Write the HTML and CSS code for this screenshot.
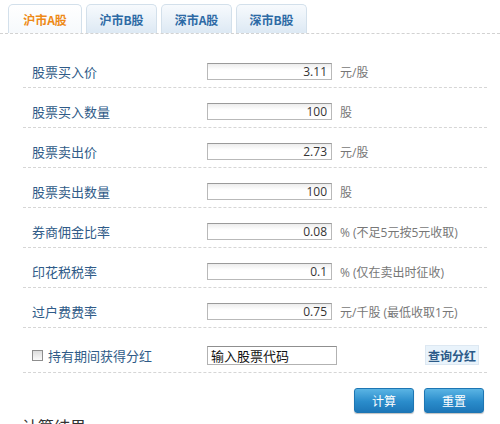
FILE: index.html
```html
<!DOCTYPE html>
<html lang="zh-CN">
<head>
<meta charset="utf-8">
<title>股票交易计算器</title>
<link rel="stylesheet" href="styles.css">
</head>
<body>
<div class="tabs">
  <div class="tab active">沪市A股</div>
  <div class="tab">沪市B股</div>
  <div class="tab">深市A股</div>
  <div class="tab">深市B股</div>
</div>
<div class="form">
  <div class="row">
    <span class="label">股票买入价</span>
    <input class="num" type="text" value="3.11">
    <span class="unit">元/股</span>
  </div>
  <div class="row">
    <span class="label">股票买入数量</span>
    <input class="num" type="text" value="100">
    <span class="unit">股</span>
  </div>
  <div class="row">
    <span class="label">股票卖出价</span>
    <input class="num" type="text" value="2.73">
    <span class="unit">元/股</span>
  </div>
  <div class="row">
    <span class="label">股票卖出数量</span>
    <input class="num" type="text" value="100">
    <span class="unit">股</span>
  </div>
  <div class="row">
    <span class="label">券商佣金比率</span>
    <input class="num" type="text" value="0.08">
    <span class="unit">% (不足5元按5元收取)</span>
  </div>
  <div class="row">
    <span class="label">印花税税率</span>
    <input class="num" type="text" value="0.1">
    <span class="unit">% (仅在卖出时征收)</span>
  </div>
  <div class="row">
    <span class="label">过户费费率</span>
    <input class="num" type="text" value="0.75">
    <span class="unit">元/千股 (最低收取1元)</span>
  </div>
  <div class="row row-div">
    <label class="label check-label"><input class="check" type="checkbox">持有期间获得分红</label>
    <input class="code" type="text" value="输入股票代码">
    <span class="query">查询分红</span>
  </div>
  <div class="actions">
    <button class="btn">计算</button>
    <button class="btn">重置</button>
  </div>
</div>
<h2 class="result">计算结果</h2>
</body>
</html>
```
FILE: styles.css
```css
html, body {
  margin: 0;
  padding: 0;
  background: #fff;
  font-family: "Noto Sans CJK SC", "Liberation Sans", sans-serif;
  overflow: hidden;
}

.tabs {
  display: flex;
  gap: 4px;
  padding: 4px 0 0 8px;
  border-bottom: 1px dashed #d2d2d2;
  height: 29px;
}

.tab {
  width: 71px;
  height: 29px;
  box-sizing: border-box;
  border: 1px solid #d3e0eb;
  border-bottom: none;
  border-radius: 5px 5px 0 0;
  background: linear-gradient(#f7fafd, #dde9f4);
  color: #2d6aa5;
  font-size: 12px;
  font-weight: bold;
  display: flex;
  align-items: center;
  justify-content: center;
}

.tab.active {
  width: 74px;
  background: linear-gradient(#ffffff, #f6f9fc);
  color: #ee8a17;
}

.form {
  margin: 14px 0 0 23px;
  width: 464px;
}

.row {
  display: flex;
  align-items: center;
  height: 40px;
  box-sizing: border-box;
  padding-top: 8px;
  border-bottom: 1px dashed #d6d6d6;
}

.label {
  width: 184px;
  box-sizing: border-box;
  padding-left: 9px;
  font-size: 13px;
  color: #2f5b88;
  flex: none;
}

.num {
  width: 125px;
  height: 17px;
  box-sizing: border-box;
  margin: 0;
  padding: 0 4px 0 0;
  border: 1px solid #b9b9b9;
  border-top-color: #9a9a9a;
  background: linear-gradient(#ececec, #ffffff 6px);
  text-align: right;
  font-family: "Open Sans", sans-serif;
  font-size: 12px;
  color: #333;
}

.unit {
  margin-left: 8px;
  font-size: 12px;
  color: #777;
  font-family: "Open Sans", "Noto Sans CJK SC", sans-serif;
}

.row-div {
  height: 45px;
  padding-top: 10px;
}

.check-label {
  display: flex;
  align-items: center;
}

.check {
  -webkit-appearance: none;
  appearance: none;
  width: 11px;
  height: 11px;
  margin: 0 5px 0 0;
  border: 1px solid #8e8e8e;
  background: linear-gradient(#dcdcdc, #fbfbfb);
  flex: none;
}

.code {
  width: 130px;
  height: 19px;
  box-sizing: border-box;
  margin: 0;
  padding: 0 0 0 3px;
  border: 1px solid #b2b2b2;
  border-top-color: #8f8f8f;
  font-family: "Noto Sans CJK SC", sans-serif;
  font-size: 13px;
  color: #111;
  background: #fff;
}

.query {
  margin-left: auto;
  margin-right: 8px;
  width: 54px;
  height: 20px;
  box-sizing: border-box;
  border: 1px solid #dde8f2;
  background: #e9f3fb;
  color: #2b5a88;
  font-size: 12px;
  font-weight: bold;
  display: flex;
  align-items: center;
  justify-content: center;
}

.actions {
  display: flex;
  justify-content: flex-end;
  gap: 10px;
  margin-top: 15px;
  padding-right: 3px;
}

.btn {
  width: 60px;
  height: 25px;
  margin: 0;
  padding: 0;
  border: 1px solid #1d76b3;
  border-radius: 3px;
  background: linear-gradient(#5ab4e4, #2a8ccb 55%, #1d77b8);
  box-shadow: 0 1px 1px rgba(0,0,0,0.25);
  color: #fff;
  font-family: "Noto Sans CJK SC", sans-serif;
  font-size: 12px;
}

.result {
  margin: 2px 0 0 22px;
  font-size: 16px;
  line-height: 22px;
  font-weight: normal;
  color: #333;
}
```
